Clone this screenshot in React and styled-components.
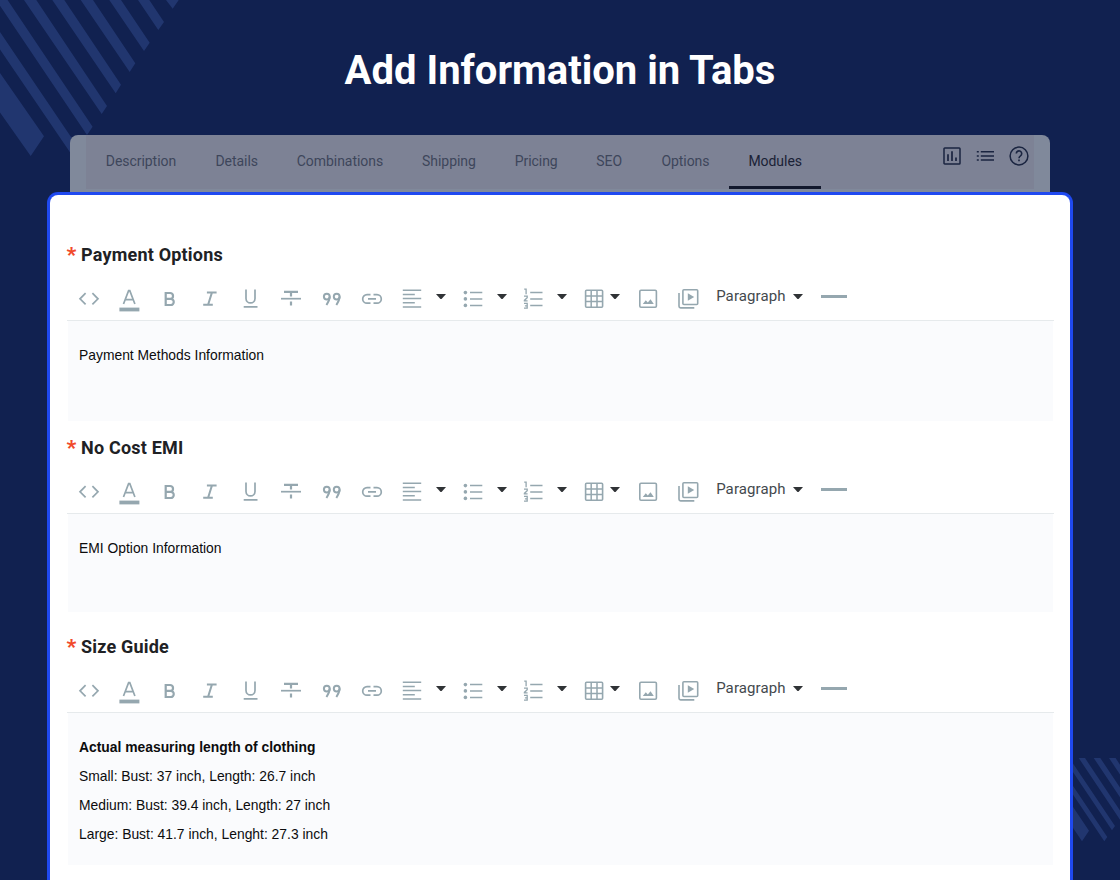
import React from 'react'
import styled, { createGlobalStyle } from 'styled-components'

const tabs = [
  { name: 'Description', width: 69.5 },
  { name: 'Details', width: 42 },
  { name: 'Combinations', width: 84.5 },
  { name: 'Shipping', width: 53.5 },
  { name: 'Pricing', width: 41 },
  { name: 'SEO', width: 25 },
  { name: 'Options', width: 47.5 },
  { name: 'Modules', width: 52, active: true },
]

const sections = [
  {
    title: 'Payment Options',
    lines: [{ text: 'Payment Methods Information' }],
    height: 100,
    gap: 13,
  },
  {
    title: 'No Cost EMI',
    lines: [{ text: 'EMI Option Information' }],
    height: 98,
    gap: 21,
  },
  {
    title: 'Size Guide',
    lines: [
      { text: 'Actual measuring length of clothing', bold: true },
      { text: 'Small: Bust: 37 inch, Length: 26.7 inch' },
      { text: 'Medium: Bust: 39.4 inch, Length: 27 inch' },
      { text: 'Large: Bust: 41.7 inch, Lenght: 27.3 inch' },
    ],
    height: 152,
    gap: 0,
  },
]

const Icon = ({ children }) => (
  <IconSvg viewBox="0 0 24 26">{children}</IconSvg>
)

const CodeIcon = () => (
  <Icon>
    <path d="M8.6 7.2L3 12.8l5.6 5.6M15.4 7.2l5.6 5.6-5.6 5.6" />
  </Icon>
)
const ColorIcon = () => (
  <Icon>
    <path d="M6.5 18L11.6 4.7h1.2L17.9 18M8.2 13.6h8" />
    <path d="M2.4 23.5h20" strokeWidth="3.8" />
  </Icon>
)
const BoldIcon = () => (
  <Icon>
    <path
      d="M7.7 7h4.4a2.9 2.9 0 0 1 0 5.9H7.7zM7.7 12.9h5a3 3 0 0 1 0 6.1h-5z"
      strokeWidth="2.2"
    />
  </Icon>
)
const ItalicIcon = () => (
  <Icon>
    <path d="M8.9 6.6h9.7M5.2 18.7h9.6M13.9 6.6l-3.8 12.1" strokeWidth="2" />
  </Icon>
)
const UnderlineIcon = () => (
  <Icon>
    <path d="M7 3.6v8.8a4.5 4.5 0 0 0 9 0V3.6M4.7 20.8h13.8" />
  </Icon>
)
const StrikeIcon = () => (
  <Icon>
    <path d="M5 5.8h14M12 5.8v4.6M12 15.4v4.2" strokeWidth="2.2" />
    <path d="M2 12.7h20" />
  </Icon>
)
const QuoteIcon = () => (
  <Icon>
    <circle cx="7.8" cy="10.6" r="2.9" strokeWidth="2" />
    <circle cx="17.7" cy="10.6" r="2.9" strokeWidth="2" />
    <path d="M10.7 10.6c0 3.6-1.5 5.7-3.3 8.4M20.6 10.6c0 3.6-1.5 5.7-3.3 8.4" strokeWidth="2" />
  </Icon>
)
const LinkIcon = () => (
  <Icon>
    <path d="M10.5 8.6H7a4.3 4.3 0 0 0 0 8.6h3.5M13.5 8.6H17a4.3 4.3 0 0 1 0 8.6h-3.5M8 12.9h8" />
  </Icon>
)
const AlignIcon = () => (
  <Icon>
    <path d="M2.8 4.3h18.4M2.8 8.5h12M2.8 12.6h18.4M2.8 16.8h12M2.8 21.1h18.4" strokeWidth="1.5" />
  </Icon>
)
const BulletIcon = () => (
  <Icon>
    <path d="M9 6.6h12.3M9 12.9h12.3M9 19.4h12.3" strokeWidth="1.5" />
    <g fill="currentColor" stroke="none">
      <circle cx="4.4" cy="6.6" r="1.8" />
      <circle cx="4.4" cy="12.9" r="1.8" />
      <circle cx="4.4" cy="19.4" r="1.8" />
    </g>
  </Icon>
)
const NumberIcon = () => (
  <Icon>
    <path d="M9.2 6.6h12.3M9.2 12.9h12.3M9.2 19.4h12.3" strokeWidth="1.5" />
    <path
      d="M3.2 3.2h1.9v5M3 10.2h3.2v1.6L3.4 14.4v.5h3.2M3 17.4h3.2v4.8H3M3.9 19.8h2.3"
      strokeWidth="1.3"
    />
  </Icon>
)
const TableIcon = () => (
  <Icon>
    <rect x="3.6" y="4.3" width="17" height="16.9" rx="1" strokeWidth="1.6" />
    <path d="M9.2 4.3v16.9M15 4.3v16.9M3.6 9.9h17M3.6 15.6h17" strokeWidth="1.5" />
  </Icon>
)
const ImageIcon = () => (
  <Icon>
    <rect x="3.8" y="4.3" width="16.6" height="16.9" rx="1.2" strokeWidth="1.6" />
    <path d="M6.8 18l3-3.7 2 2.3 2.7-3.4 3.3 4.8z" fill="currentColor" stroke="none" />
  </Icon>
)
const VideoIcon = () => (
  <Icon>
    <rect x="6.9" y="3.7" width="14.8" height="14.8" rx="1" strokeWidth="1.6" />
    <path d="M3 7.1v13.2c0 1 .6 1.6 1.6 1.6h13.7" strokeWidth="1.6" />
    <path d="M11.8 7.2v7.6l6.4-3.8z" fill="currentColor" stroke="none" />
  </Icon>
)

const Caret = () => (
  <CaretSvg viewBox="0 0 10 5">
    <path d="M0 0h10L6 4.5q-1 1-2 0z" />
  </CaretSvg>
)

const Toolbar = () => (
  <ToolbarRow>
    <Tool><CodeIcon /></Tool>
    <Tool><ColorIcon /></Tool>
    <Tool><BoldIcon /></Tool>
    <Tool><ItalicIcon /></Tool>
    <Tool><UnderlineIcon /></Tool>
    <Tool><StrikeIcon /></Tool>
    <Tool><QuoteIcon /></Tool>
    <Tool><LinkIcon /></Tool>
    <Tool><AlignIcon /></Tool>
    <DropButton><Caret /></DropButton>
    <Tool><BulletIcon /></Tool>
    <DropButton><Caret /></DropButton>
    <Tool><NumberIcon /></Tool>
    <DropButton><Caret /></DropButton>
    <Tool><TableIcon /></Tool>
    <DropButton $narrow><Caret /></DropButton>
    <Tool><ImageIcon /></Tool>
    <Tool><VideoIcon /></Tool>
    <FormatButton>
      <span>Paragraph</span>
      <Caret />
    </FormatButton>
    <Rule />
  </ToolbarRow>
)

const Editor = ({ title, lines, height, gap }) => (
  <Section $gap={gap}>
    <Label>
      <Star>*</Star>
      {title}
    </Label>
    <Toolbar />
    <Content $height={height}>
      {lines.map((line) => (
        <Line key={line.text} $bold={line.bold}>{line.text}</Line>
      ))}
    </Content>
  </Section>
)

export default function App() {
  return (
    <>
      <GlobalStyle />
      <Page>
        <TopStripes viewBox="0 0 180 160">
          <path d="M166 0h12.7l-6 8.7zM138 0h11.3l14.7 22-5.7 8zM109.3 0H121l28.7 42.7-5.7 8.3zM80.7 0h12.3l42.3 63.3-5.6 8.7zM52.3 0h12l56.7 84.7-5.3 8.6zM24 0h12.3L107 106l-5.3 8zM0 0h7.6l85 126.7L87 135 0 5.8zM0 32l78.3 115.7-5.6 8.6L0 49.5zM0 73l44 63.3L30.7 156 0 112.5z" />
        </TopStripes>
        <BottomStripes viewBox="0 0 60 90">
          <path d="M49 0h6.6L60 6.8v9.7zM33.7 0h6.6L60 29.6v9.6zM18.7 0h6.3l35 52.5v9.2zM3.5 0h5.8L55 68l-3 4.3zM0 8.5L47.3 79l-3 4.3L0 17.3zM0 29.5l29 43.2-7 10.6L0 50.5z" />
        </BottomStripes>
        <Title>Add Information in Tabs</Title>
        <TabPanel>
          <TabBar>
            {tabs.map((tab) => (
              <Tab key={tab.name} $width={tab.width} $active={tab.active}>{tab.name}</Tab>
            ))}
            <Actions>
              <svg width="18" height="18" viewBox="0 0 18 18">
                <rect x="1" y="1" width="16" height="16" rx="0.8" strokeWidth="1.5" />
                <path d="M5 7.2V14M9 4.2V14M13 10.4V14" strokeWidth="1.7" />
              </svg>
              <svg width="18" height="18" viewBox="0 0 18 18">
                <path d="M4.8 4.8H18M4.8 8.9H18M4.8 13H18" strokeWidth="1.5" />
                <path d="M.8 4.8h2M.8 8.9h2M.8 13h2" strokeWidth="1.5" />
              </svg>
              <svg width="20" height="20" viewBox="0 0 20 20">
                <circle cx="10" cy="10" r="8.9" strokeWidth="1.5" />
                <path d="M7.3 7.6a2.7 2.7 0 1 1 4.2 2.2c-1 .7-1.5 1.2-1.5 2.4M10 13.4v1.9" strokeWidth="1.6" />
              </svg>
            </Actions>
          </TabBar>
        </TabPanel>
        <Card>
          {sections.map((section) => (
            <Editor key={section.title} {...section} />
          ))}
        </Card>
      </Page>
    </>
  )
}

const GlobalStyle = createGlobalStyle`
  * {
    box-sizing: border-box;
  }
  body {
    margin: 0;
    background: #112150;
    overflow: hidden;
  }
`
const Page = styled.main`
  position: relative;
  height: 880px;
  overflow: hidden;
  display: flex;
  flex-direction: column;
  align-items: center;
  background: #112150;
  font-family: Roboto, "Noto Sans", sans-serif;
`
const TopStripes = styled.svg`
  position: absolute;
  left: 0;
  top: 0;
  width: 180px;
  height: 160px;
  fill: #21366f;
`
const BottomStripes = styled.svg`
  position: absolute;
  right: 0;
  bottom: 32px;
  width: 60px;
  height: 90px;
  fill: #21366f;
`
const Title = styled.h1`
  margin: 0;
  height: 135px;
  flex: none;
  padding-top: 47px;
  font-size: 40px;
  line-height: 48px;
  font-weight: 700;
  color: #fff;
  white-space: nowrap;
`
const TabPanel = styled.div`
  position: relative;
  width: 980px;
  height: 57px;
  flex: none;
  padding: 0 16px;
  border-radius: 8px 8px 0 0;
  background: #80899b;
`
const TabBar = styled.nav`
  display: flex;
  height: 54px;
  background: #7d8295;
`
const Tab = styled.div`
  width: ${({ $width }) => $width + 40}px;
  height: 54px;
  flex: none;
  display: flex;
  justify-content: center;
  padding: 16px 0 0 0.4px;
  font-size: 14px;
  line-height: 20px;
  letter-spacing: -0.05px;
  white-space: nowrap;
  color: ${({ $active }) => ($active ? '#1a2136' : '#3d465b')};
  border-bottom: 3px solid ${({ $active }) => ($active ? '#12182d' : 'transparent')};
`
const Actions = styled.div`
  display: flex;
  align-items: center;
  gap: 15px;
  height: 20px;
  margin: 11px 5px 0 auto;
  svg {
    fill: none;
    stroke: #1a2440;
  }
`
const Card = styled.div`
  position: relative;
  width: 1026px;
  flex: 1;
  border: 3px solid #1f49f0;
  border-bottom: none;
  border-radius: 11px 11px 0 0;
  background: #fff;
  padding: 46px 16px 0 17px;
`
const Section = styled.section`
  margin-bottom: ${({ $gap }) => $gap}px;
`
const Label = styled.h2`
  display: flex;
  margin: 0;
  height: 28px;
  font-size: 18px;
  line-height: 28px;
  letter-spacing: 0.2px;
  font-weight: 700;
  color: #202124;
`
const Star = styled.span`
  width: 14px;
  margin-left: -0.5px;
  margin-right: 0.5px;
  font-size: 21px;
  line-height: 28px;
  font-weight: 900;
  color: #f14a2b;
`
const ToolbarRow = styled.div`
  display: flex;
  align-items: center;
  height: 52px;
  padding: 8px 0 0 1.8px;
  border-bottom: 1px solid #e6eaec;
  color: #95a7af;
`
const Tool = styled.div`
  width: 40.4px;
  flex: none;
  display: flex;
  justify-content: center;
`
const IconSvg = styled.svg`
  width: 24px;
  height: 26px;
  fill: none;
  stroke: currentColor;
  stroke-width: 1.7;
`
const DropButton = styled.div`
  display: flex;
  width: ${({ $narrow }) => ($narrow ? 13.6 : 20.1)}px;
  height: 10px;
  flex: none;
  padding-left: ${({ $narrow }) => ($narrow ? 0.4 : 4)}px;
  margin-left: ${({ $narrow }) => ($narrow ? -4 : 0)}px;
  margin-right: ${({ $narrow }) => ($narrow ? 4 : 0)}px;
`
const CaretSvg = styled.svg`
  width: 10px;
  height: 5px;
  flex: none;
  fill: #303336;
`
const FormatButton = styled.div`
  display: flex;
  align-items: center;
  gap: 7.4px;
  width: 105px;
  padding: 0 0 5px 8px;
  font-size: 15px;
  line-height: 20px;
  letter-spacing: 0.1px;
  color: #43494d;
`
const Rule = styled.div`
  width: 26px;
  height: 3px;
  margin: 0 0 5px 7.5px;
  background: #95a7af;
`
const Content = styled.div`
  height: ${({ $height }) => $height}px;
  margin: 0 1px;
  padding: 20px 11px 0;
  background: #fafbfd;
  font-family: "Liberation Sans", Arial, sans-serif;
  color: #0c0c0d;
`
const Line = styled.p`
  margin: 0;
  font-size: 13.86px;
  line-height: 29px;
  font-weight: ${({ $bold }) => ($bold ? 700 : 400)};
`
